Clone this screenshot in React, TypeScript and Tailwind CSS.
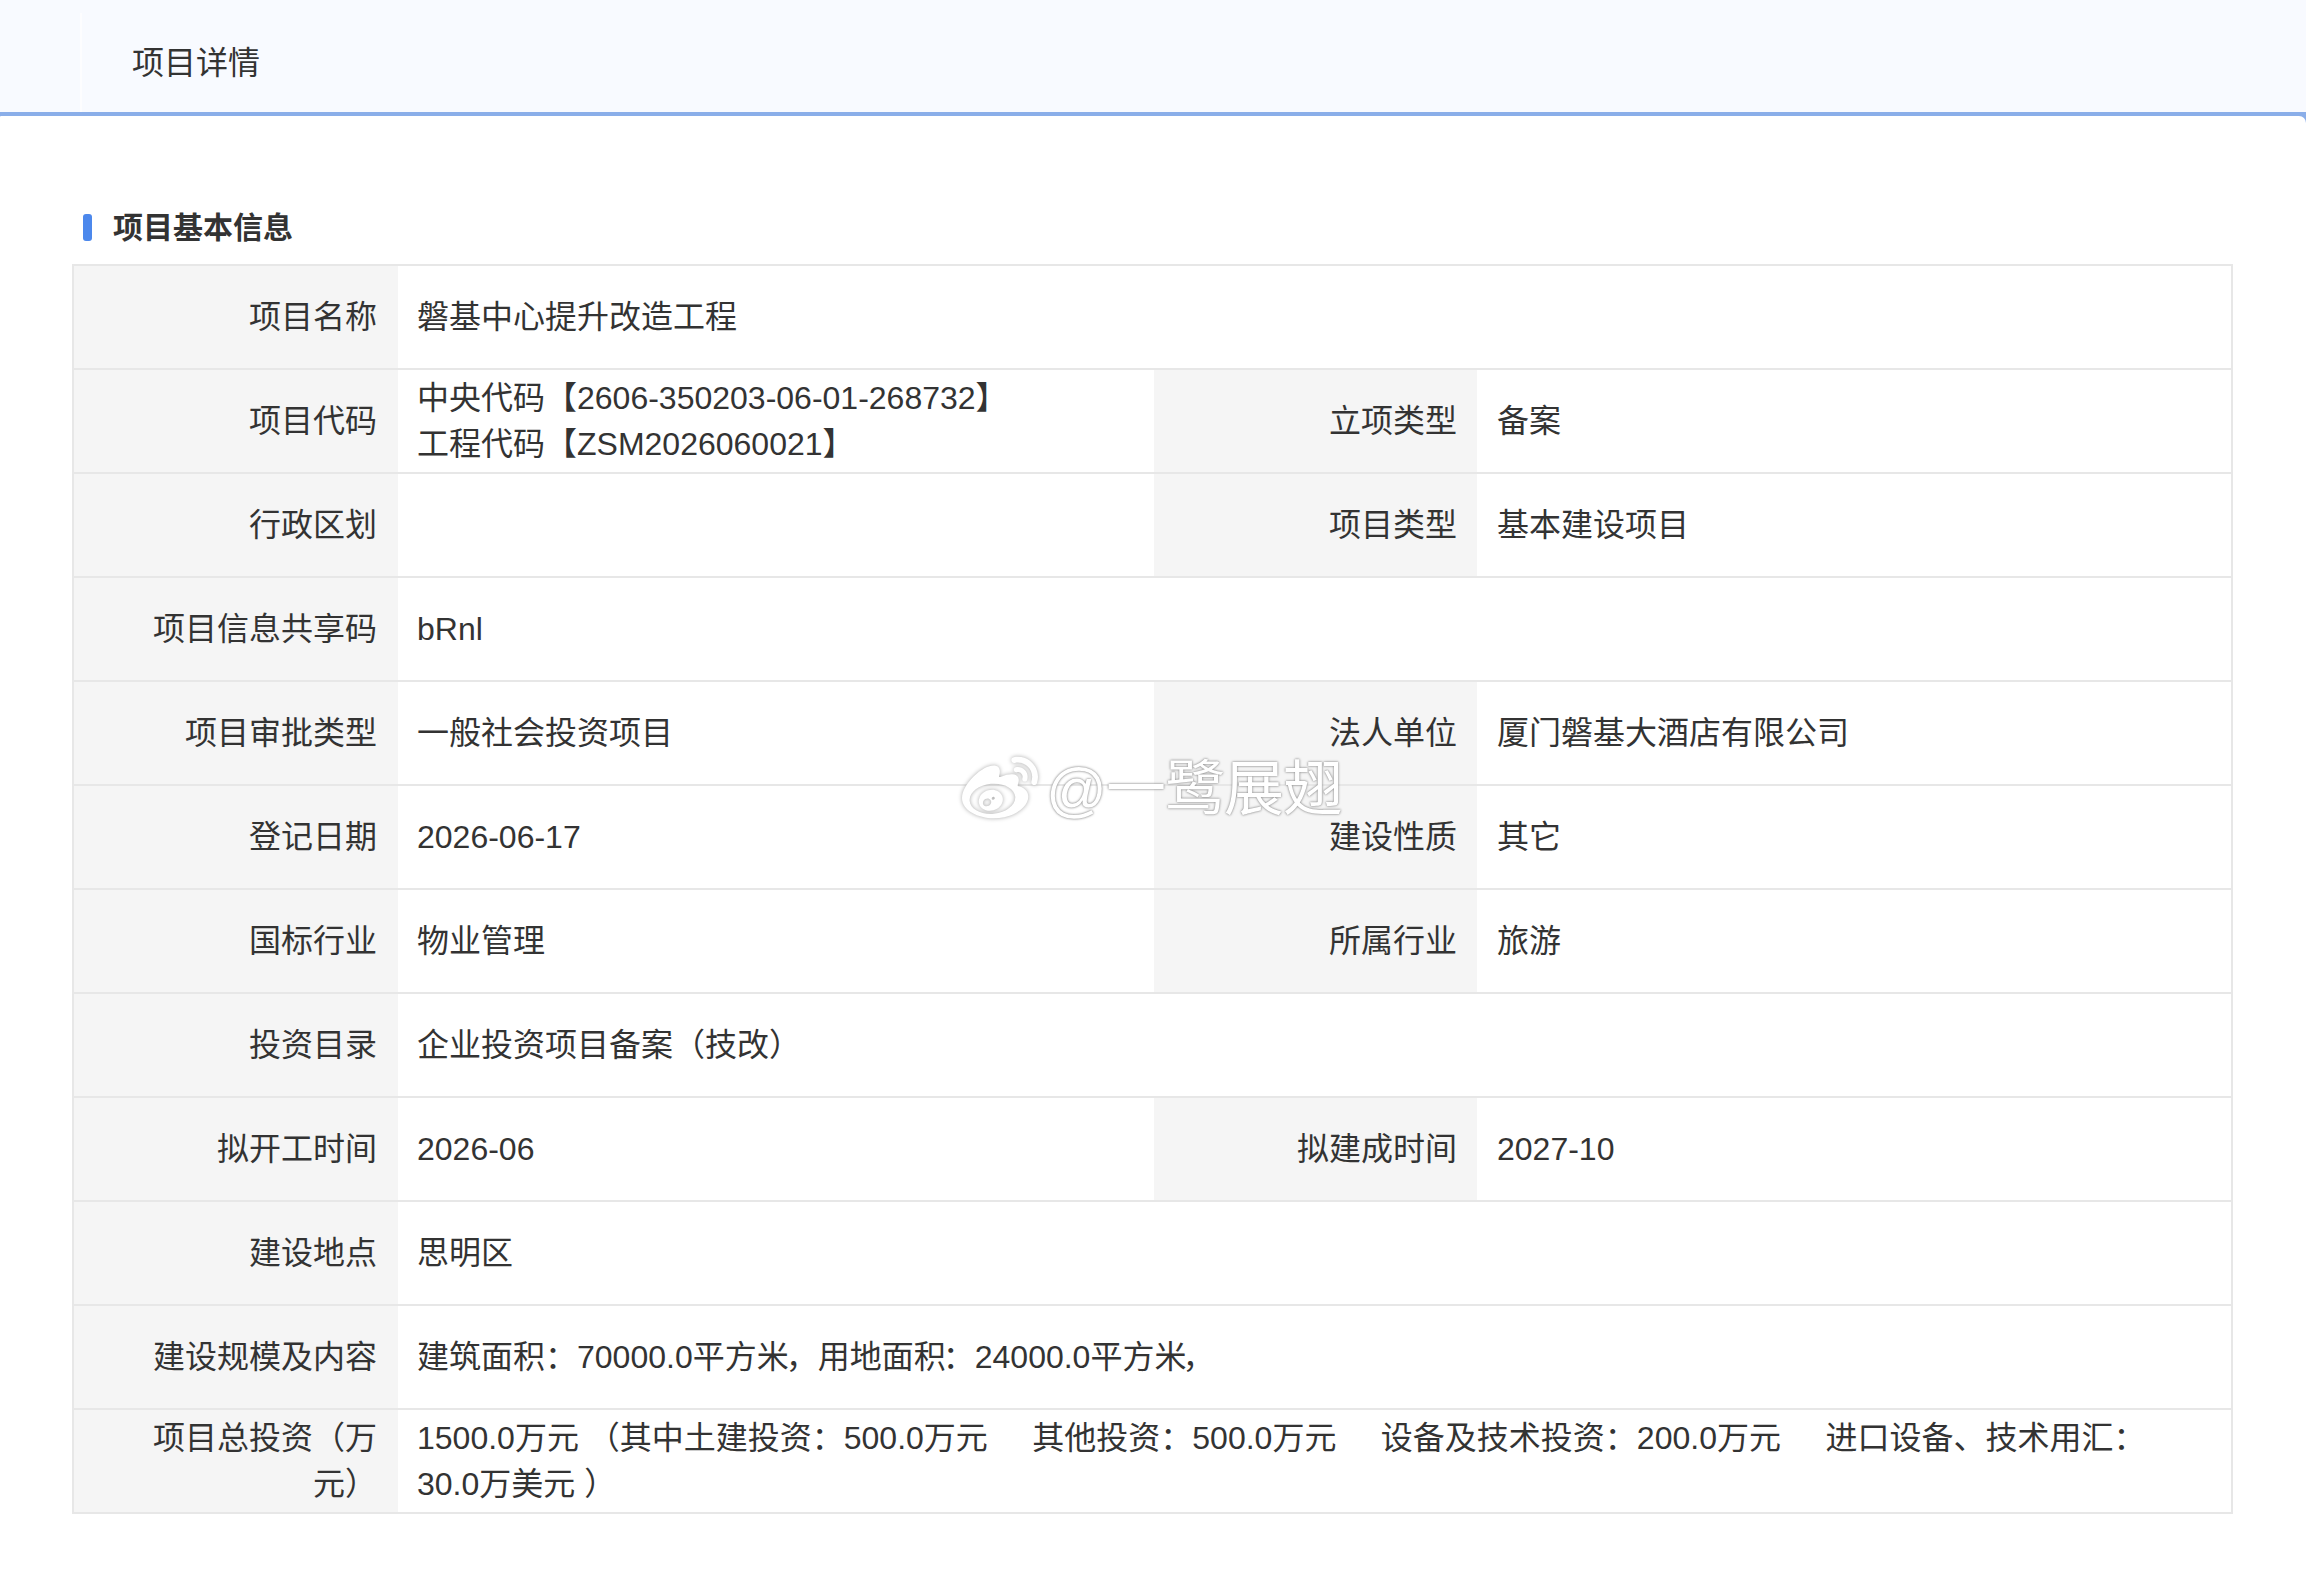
import { FaWeibo } from 'react-icons/fa';

const FONT = "font-['Liberation_Sans','Noto_Sans_CJK_SC',sans-serif]";

type Row = {
  label: React.ReactNode;
  value: React.ReactNode;
  label2?: string;
  value2?: string;
};

const rows: Row[] = [
  { label: '项目名称', value: '磐基中心提升改造工程' },
  {
    label: '项目代码',
    value: (
      <>
        中央代码【2606-350203-06-01-268732】
        <br />
        工程代码【ZSM2026060021】
      </>
    ),
    label2: '立项类型',
    value2: '备案',
  },
  { label: '行政区划', value: '', label2: '项目类型', value2: '基本建设项目' },
  { label: '项目信息共享码', value: 'bRnl' },
  { label: '项目审批类型', value: '一般社会投资项目', label2: '法人单位', value2: '厦门磐基大酒店有限公司' },
  { label: '登记日期', value: '2026-06-17', label2: '建设性质', value2: '其它' },
  { label: '国标行业', value: '物业管理', label2: '所属行业', value2: '旅游' },
  { label: '投资目录', value: '企业投资项目备案（技改）' },
  { label: '拟开工时间', value: '2026-06', label2: '拟建成时间', value2: '2027-10' },
  { label: '建设地点', value: '思明区' },
  {
    label: '建设规模及内容',
    value: (
      <>
        建筑面积：70000.0平方米<span className="-ml-[3px]">，</span>用地面积<span className="-ml-[3px]">：</span>
        24000.0平方米<span className="-ml-[4px]">，</span>
      </>
    ),
  },
  {
    label: '项目总投资（万元）',
    value: (
      <>
        1500.0万元 （其中土建投资：500.0万元 {'\u00a0\u00a0\u00a0\u00a0'}其他投资：500.0万元 {'\u00a0\u00a0\u00a0\u00a0'}
        设备及技术投资：200.0万元 {'\u00a0\u00a0\u00a0\u00a0'}进口设备、技术用汇：
        <br />
        30.0万美元 ）
      </>
    ),
  },
];

const labelCls = 'border-y-2 border-[#e7e7e7] bg-[#f5f5f5] pl-[50px] text-right align-middle font-normal';
const valueCls = 'border-y-2 border-[#e7e7e7] bg-white pr-5 text-left align-middle';

export default function App() {
  return (
    <div className={`relative min-h-[1574px] bg-white text-[32px] leading-[46px] text-[#333] ${FONT}`}>
      {/* 顶部标题 */}
      <div className="flex h-[116px] border-b-4 border-[#8aaee9] bg-[#f8faff] pt-[13px]">
        <div className="w-[82px] border-r-2 border-[#fdfdff]" />
        <div className="pl-[50px] pt-[27px]">项目详情</div>
      </div>

      <div className="bg-[#8aaee9]">
        <div className="rounded-tl-[1px] rounded-tr-[7px] bg-white pl-[72px] pr-[73px] pt-[88px] pb-[62px]">
          <div className="mb-[14px] flex h-[46px] items-center pl-[11px]">
            <span className="h-[27px] w-[9px] rounded-[3px] bg-[#4c88ec]" />
            <h3 className="ml-[21px] pt-[2px] text-[30px] font-bold text-[#333]">项目基本信息</h3>
          </div>

          <table className="w-full table-fixed border-collapse border-x-2 border-[#e7e7e7]">
            <colgroup>
              <col className="w-[325px]" />
              <col className="w-[756px]" />
              <col className="w-[323px]" />
              <col />
            </colgroup>
            <tbody>
              {rows.map((r, i) => (
                <tr key={i} className="h-[104px]">
                  <th className={`${labelCls} pr-[21px]`}>{r.label}</th>
                  {r.label2 ? (
                    <>
                      <td className={`${valueCls} pl-[19px]`}>{r.value}</td>
                      <th className={`${labelCls} pr-5`}>{r.label2}</th>
                      <td className={`${valueCls} pl-5`}>{r.value2}</td>
                    </>
                  ) : (
                    <td className={`${valueCls} pl-[19px]`} colSpan={3}>
                      {r.value}
                    </td>
                  )}
                </tr>
              ))}
            </tbody>
          </table>
        </div>
      </div>

      {/* 微博水印 */}
      <div className="pointer-events-none absolute left-[958px] top-[750px] flex items-center text-[60px] leading-[80px] tracking-[-1px] text-white [text-shadow:0_0_2px_#8a8a8a,0_0_3px_#aaaaaa]">
        <FaWeibo className="h-[76px] w-[84px] drop-shadow-[0_0_2px_#aaaaaa]" />
        <span className="ml-[4px]">@一鹭展翅</span>
      </div>
    </div>
  );
}
